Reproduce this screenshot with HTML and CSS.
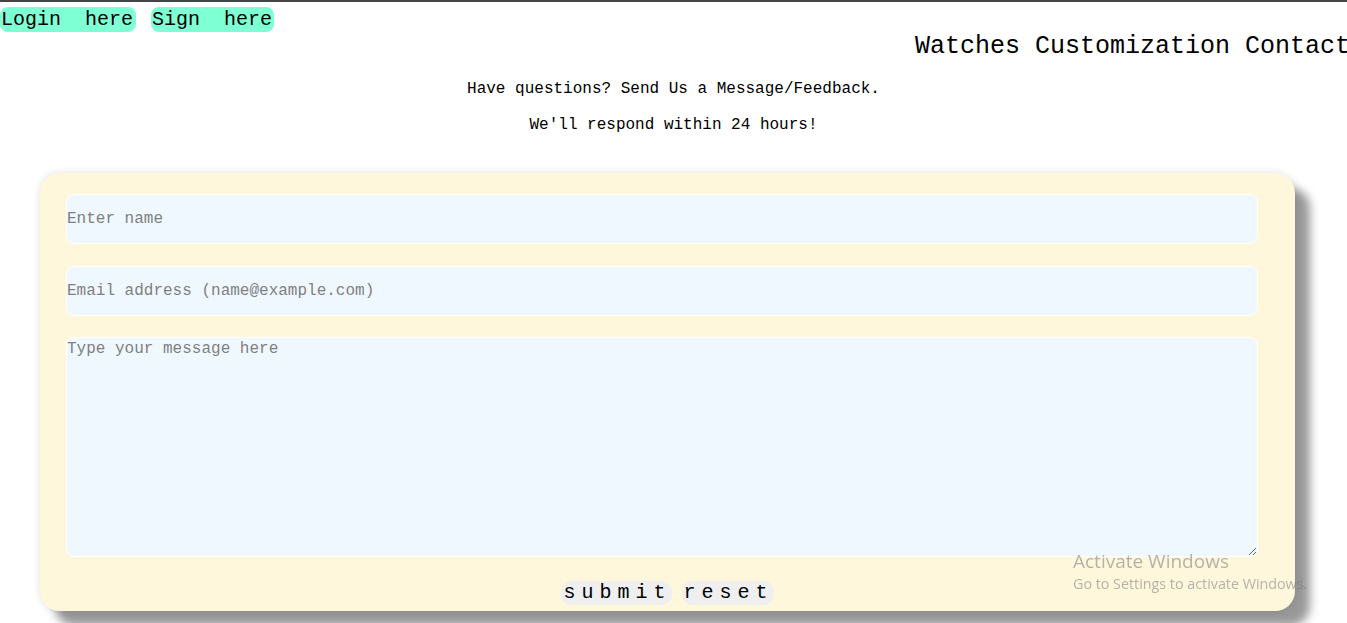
FILE: index.html
```html
<!DOCTYPE html>
<html lang="en">
<head>
<meta charset="utf-8">
<title>Contact</title>
<link rel="stylesheet" href="styles.css">
</head>
<body>
<div class="top">
  <a class="pill" href="#">Login&nbsp; here</a>
  <a class="pill" href="#">Sign&nbsp; here</a>
</div>
<nav class="nav">
  <a href="#">Watches</a>
  <a href="#">Customization</a>
  <a href="#">Contact</a>
</nav>
<p class="intro">Have questions? Send Us a Message/Feedback.</p>
<p class="intro">We'll respond within 24 hours!</p>
<form class="card">
  <input class="field" type="text" placeholder="Enter name">
  <input class="field" type="email" placeholder="Email address (name@example.com)">
  <textarea class="field area" placeholder="Type your message here"></textarea>
  <div class="actions">
    <button class="btn" type="submit">submit</button>
    <button class="btn" type="reset">reset</button>
  </div>
</form>
<div class="watermark">
  <div class="wm-title">Activate Windows</div>
  <div class="wm-sub">Go to Settings to activate Windows.</div>
</div>
</body>
</html>
```
FILE: styles.css
```css
html, body {
  margin: 0;
  padding: 0;
  background: #ffffff;
  overflow: hidden;
}
body {
  border-top: 2px solid #454545;
  font-family: "Liberation Mono", "Courier New", monospace;
  color: #000;
  height: 621px;
}
.top {
  display: flex;
  gap: 15px;
  margin-top: 5px;
}
.pill {
  background: #7fffd4;
  color: #000;
  text-decoration: none;
  font-size: 20px;
  line-height: 25px;
  height: 25px;
  padding: 0 3px 0 1px;
  border-radius: 8px;
}
.pill + .pill {
  padding: 0 2px 0 1px;
}
.nav {
  display: flex;
  justify-content: flex-end;
  gap: 15px;
  margin-right: -3px;
  height: 30px;
  line-height: 30px;
}
.nav a {
  color: #000;
  text-decoration: none;
  font-size: 25px;
}
.intro {
  text-align: center;
  font-size: 16px;
  line-height: 20px;
  margin: 16px 0;
}
.intro:first-of-type {
  margin-top: 17px;
}
.card {
  margin: 38px 0 0 40px;
  width: 1255px;
  height: 438px;
  box-sizing: border-box;
  background: #fff7dc;
  border-radius: 20px;
  box-shadow: 0 0 8px rgba(0, 0, 0, 0.12), 15px 15px 10px #999999;
  padding: 21px 0 0 26px;
  display: flex;
  flex-direction: column;
}
.field {
  display: block;
  width: 1192px;
  box-sizing: border-box;
  background: #f0f8ff;
  border: 1px solid #ffffff;
  border-radius: 8px;
  font-family: "Liberation Mono", "Courier New", monospace;
  font-size: 16px;
  padding: 0;
  outline: none;
  color: #000;
}
.field::placeholder {
  color: #808080;
}
input.field {
  height: 50px;
  margin-bottom: 22px;
}
input.field + input.field {
  margin-bottom: 21px;
}
.area {
  height: 220px;
  padding: 2px 0;
  resize: both;
}
.actions {
  display: flex;
  justify-content: center;
  gap: 10px;
  margin-top: 24px;
  margin-left: -26px;
}
.btn {
  font-family: "Liberation Mono", "Courier New", monospace;
  font-size: 20px;
  letter-spacing: 6px;
  line-height: 24px;
  height: 24px;
  padding: 0 0 0 2px;
  border: none;
  border-radius: 10px;
  background: #efefef;
  color: #000;
}
.watermark {
  position: fixed;
  left: 1073px;
  top: 549px;
  font-family: "Open Sans", "Noto Sans", sans-serif;
  color: rgba(120, 120, 120, 0.55);
  white-space: nowrap;
  pointer-events: none;
}
.wm-title {
  font-size: 19px;
  line-height: 24px;
}
.wm-sub {
  font-size: 14.3px;
  line-height: 22px;
}
```
